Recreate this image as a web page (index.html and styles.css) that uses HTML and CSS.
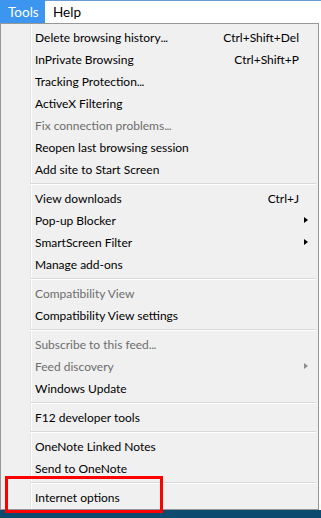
FILE: index.html
```html
<!DOCTYPE html>
<html lang="en">
<head>
  <meta charset="UTF-8" />
  <title>Tools menu</title>
  <link rel="stylesheet" href="styles.css">
</head>
<body>
  <div class="window">
    <div class="menubar">
      <span class="menubar-item active">Tools</span>
      <span class="menubar-item">Help</span>
    </div>

    <div class="dropdown">
      <div class="item"><span class="label">Delete browsing history<span class="dots">...</span></span><span class="key">Ctrl+Shift+Del</span></div>
      <div class="item"><span class="label">InPrivate Browsing</span><span class="key">Ctrl+Shift+P</span></div>
      <div class="item"><span class="label">Tracking Protection<span class="dots">...</span></span></div>
      <div class="item"><span class="label">ActiveX Filtering</span></div>
      <div class="item disabled"><span class="label">Fix connection problems<span class="dots">...</span></span></div>
      <div class="item"><span class="label">Reopen last browsing session</span></div>
      <div class="item"><span class="label">Add site to Start Screen</span></div>
      <div class="sep"></div>
      <div class="item"><span class="label">View downloads</span><span class="key">Ctrl+J</span></div>
      <div class="item"><span class="label">Pop-up Blocker</span><span class="arrow"></span></div>
      <div class="item"><span class="label">SmartScreen Filter</span><span class="arrow"></span></div>
      <div class="item"><span class="label">Manage add-ons</span></div>
      <div class="sep"></div>
      <div class="item disabled"><span class="label">Compatibility View</span></div>
      <div class="item"><span class="label">Compatibility View settings</span></div>
      <div class="sep"></div>
      <div class="item disabled"><span class="label">Subscribe to this feed<span class="dots">...</span></span></div>
      <div class="item disabled"><span class="label">Feed discovery</span><span class="arrow"></span></div>
      <div class="item"><span class="label">Windows Update</span></div>
      <div class="sep"></div>
      <div class="item"><span class="label">F12 developer tools</span></div>
      <div class="sep"></div>
      <div class="item"><span class="label">OneNote Linked Notes</span></div>
      <div class="item"><span class="label">Send to OneNote</span></div>
      <div class="sep"></div>
      <div class="item"><span class="label">Internet options</span></div>

      <div class="callout"></div>
    </div>

    <div class="page-strip"></div>
  </div>
</body>
</html>
```

FILE: styles.css
```css
body {
  margin: 0;
  background: #ffffff;
  font-family: Lato, "Noto Sans", sans-serif;
  font-size: 12px;
  color: #000;
}

.window {
  width: 321px;
  height: 518px;
  overflow: hidden;
}

.menubar {
  height: 23px;
  display: flex;
  background: #ffffff;
  box-sizing: border-box;
  border-top: 1px solid #6b9bd6;
}

.menubar-item {
  display: flex;
  align-items: center;
  padding: 0 8px;
  font-size: 13.5px;
}

.menubar-item.active {
  background: #3c95ef;
  color: #fff;
  width: 45px;
  box-sizing: border-box;
  margin-top: -1px;
}

.dropdown {
  position: relative;
  width: 319px;
  box-sizing: border-box;
  background-color: #f0f0f0;
  background-image: linear-gradient(to right, transparent 29px, #e2e3e3 29px, #e2e3e3 30px, #ffffff 30px, #ffffff 31px, transparent 31px);
  border: 1px solid #979797;
  padding: 2px 2px 1px 2px;
}

.item {
  height: 22px;
  display: flex;
  align-items: center;
  padding: 0 0 0 32px;
  white-space: nowrap;
}

.item .label {
  flex: 1;
}

.item .dots {
  letter-spacing: -0.5px;
}

.item .key {
  margin-right: 17px;
}

.item .arrow {
  width: 0;
  height: 0;
  margin-right: 8px;
  border-top: 3.5px solid transparent;
  border-bottom: 3.5px solid transparent;
  border-left: 4px solid #000;
}

.item.disabled {
  color: #6d6d6d;
}

.item.disabled .arrow {
  border-left-color: #8d8d8d;
}

.sep {
  height: 7px;
  margin-left: 27px;
  background: linear-gradient(to bottom, transparent 3px, #d9d9d9 3px, #d9d9d9 4px, #ffffff 4px, #ffffff 5px, transparent 5px);
}

.callout {
  position: absolute;
  left: 4px;
  top: 452px;
  width: 158px;
  height: 37px;
  border: 3px solid #ff0000;
  box-sizing: border-box;
}

.page-strip {
  height: 9px;
  background: #0d4a6f;
}
```
